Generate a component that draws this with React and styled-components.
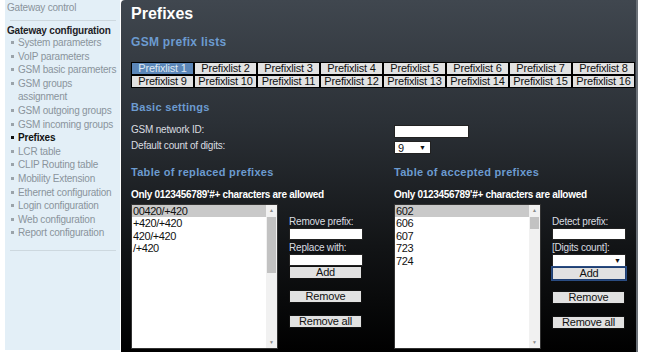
import React from "react";
import styled, { createGlobalStyle } from "styled-components";

const GlobalStyle = createGlobalStyle`
body {
    margin: 0;
    background: #fff;
    font-family: "Liberation Sans", Arial, sans-serif;
}
`

const Page = styled.div`
display: flex;
align-items: flex-start;
padding-left: 5px;
height: 359px;
overflow: hidden;
`
const Sidebar = styled.div`
width: 115px;
height: 350px;
flex-shrink: 0;
background: #e3eff7;
box-sizing: border-box;
padding: 1px 4px 0 2px;
font-size: 10px;
letter-spacing: -0.2px;
white-space: nowrap;
`
const SideTitle = styled.div`
color: ${p => p.dark ? "#1e2226" : "#8a939b"};
font-weight: ${p => p.dark ? "bold" : "normal"};
line-height: 13px;
padding-top: ${p => p.dark ? "3px" : "0"};
`
const Divider = styled.div`
border-top: 1px solid #cdd8df;
margin: ${p => p.margin};
`
const NavList = styled.ul`
list-style: none;
margin: -1px 0 0 0;
padding: 0;
`
const NavItem = styled.li`
position: relative;
padding-left: 11px;
line-height: 13.6px;
white-space: pre;
color: ${p => p.active ? "#111" : "#8a949c"};
font-weight: ${p => p.active ? "bold" : "normal"};
&::before {
    content: "";
    position: absolute;
    left: 4px;
    top: 5px;
    width: 3px;
    height: 3px;
    background: ${p => p.active ? "#111" : "#9aa3aa"};
}
`
const Main = styled.div`
width: 517px;
height: 352px;
flex-shrink: 0;
margin-left: 1px;
box-sizing: border-box;
padding: 3px 0 0 10px;
background: linear-gradient(#40474f 0%, #2b3036 35%, #121416 70%, #000 100%);
border-right: 2px solid #6a7077;
border-top-left-radius: 4px;
color: #dfe2e5;
`
const Title = styled.h1`
margin: 0;
font-size: 16px;
line-height: 22px;
color: #fff;
`
const Heading = styled.h2`
margin: ${p => p.margin || "0"};
font-size: ${p => p.size || "11px"};
line-height: 16px;
letter-spacing: 0.3px;
color: #6c9bd0;
`
const TabGrid = styled.div`
display: grid;
grid-template-columns: repeat(8, 63px);
margin-top: 12px;
`
const Tab = styled.div`
height: 13px;
box-sizing: border-box;
border: 1px solid #000;
background: ${p => p.active ? "#5b86b8" : "#e2e2e2"};
color: ${p => p.active ? "#dfe8f2" : "#111"};
font-size: 11px;
line-height: 11px;
letter-spacing: -0.2px;
text-align: center;
`
const Columns = styled.div`
display: grid;
grid-template-columns: 263px 1fr;
margin-top: ${p => p.mt || "0"};
`
const Label = styled.div`
font-size: 10px;
line-height: 16px;
height: 16px;
color: #dadde0;
letter-spacing: -0.2px;
`
const Hint = styled.div`
font-size: 10px;
font-weight: bold;
color: #fff;
line-height: 12px;
letter-spacing: -0.3px;
margin: 9px 0 3px;
`
const TextBox = styled.input`
display: block;
width: ${p => p.w || "74px"};
height: ${p => p.h || "12px"};
box-sizing: border-box;
margin: ${p => p.margin || "0"};
padding: 0;
border: 1px solid #222;
background: #fff;
`
const Select = styled.div`
display: flex;
justify-content: space-between;
align-items: center;
width: ${p => p.w};
height: 13px;
box-sizing: border-box;
margin-top: ${p => p.mt || "0"};
padding: 0 4px 0 3px;
background: #fff;
border: 1px solid #222;
color: #111;
font-size: 11px;
`
const Arrow = styled.span`
font-size: 7px;
`
const TableArea = styled.div`
display: flex;
gap: ${p => p.gap};
`
const ListBox = styled.div`
display: flex;
width: 147px;
height: 145px;
box-sizing: border-box;
background: #fff;
border: 1px solid #333;
`
const Options = styled.div`
flex: 1;
`
const Option = styled.div`
font-size: 11px;
line-height: 12.4px;
padding-left: 1px;
color: #111;
letter-spacing: -0.4px;
background: ${p => p.selected ? "#c9c9c9" : "transparent"};
`
const ScrollBar = styled.div`
width: 11px;
display: flex;
flex-direction: column;
background: #f1f1f1;
`
const ScrollArrow = styled.div`
height: 11px;
font-size: 5px;
color: #8a8a8a;
text-align: center;
line-height: 11px;
`
const Thumb = styled.div`
height: ${p => p.h};
margin: 1px 1px 0;
background: #c2c2c2;
`
const Spacer = styled.div`
flex: 1;
`
const Form = styled.div`
display: flex;
flex-direction: column;
padding-top: 11px;
`
const FormLabel = styled.div`
font-size: 10px;
line-height: 13px;
margin-top: ${p => p.mt || "0"};
color: #dadde0;
letter-spacing: -0.2px;
`
const Button = styled.button`
display: block;
width: ${p => p.w || "73px"};
height: 13px;
box-sizing: border-box;
margin: ${p => p.margin || "0"};
padding: 0;
font-family: inherit;
font-size: 11px;
line-height: 11px;
letter-spacing: -0.2px;
color: #111;
background: #e1e1e1;
border: 1px solid ${p => p.focus ? "#1f3f72" : "#111"};
outline: ${p => p.focus ? "1px solid #2a4c82" : "none"};
`

const navItems = [
    "System parameters", "VoIP parameters", "GSM basic parameters", "GSM groups\nassignment",
    "GSM outgoing groups", "GSM incoming groups", "Prefixes", "LCR table", "CLIP Routing table",
    "Mobility Extension", "Ethernet configuration", "Login configuration", "Web configuration",
    "Report configuration",
]

const replaced = ["00420/+420", "+420/+420", "420/+420", "/+420"]
const accepted = ["602", "606", "607", "723", "724"]

const PrefixList = ({ items, thumb }) => (
    <ListBox>
        <Options>
            {items.map((it, i) => <Option key={it} selected={i === 0}>{it}</Option>)}
        </Options>
        <ScrollBar>
            <ScrollArrow>▲</ScrollArrow>
            <Thumb h={thumb} />
            <Spacer />
            <ScrollArrow>▼</ScrollArrow>
        </ScrollBar>
    </ListBox>
)

export default function App() {
    return (
        <Page>
            <GlobalStyle />
            <Sidebar>
                <SideTitle>Gateway control</SideTitle>
                <Divider margin="6px 0 0 3px" />
                <SideTitle dark>Gateway configuration</SideTitle>
                <NavList>
                    {navItems.map(n => <NavItem key={n} active={n === "Prefixes"}>{n}</NavItem>)}
                </NavList>
                <Divider margin="10px 0 0 3px" />
            </Sidebar>
            <Main>
                <Title>Prefixes</Title>
                <Heading margin="9px 0 0" size="12px">GSM prefix lists</Heading>
                <TabGrid>
                    {Array.from({ length: 16 }, (_, i) => (
                        <Tab key={i} active={i === 0}>Prefixlist {i + 1}</Tab>
                    ))}
                </TabGrid>
                <Heading margin="11px 0 0">Basic settings</Heading>
                <Columns mt="7px">
                    <div>
                        <Label>GSM network ID:</Label>
                        <Label>Default count of digits:</Label>
                    </div>
                    <div>
                        <TextBox w="75px" h="13px" margin="3px 0 0" />
                        <Select w="37px" mt="3px">9<Arrow>▼</Arrow></Select>
                    </div>
                </Columns>
                <Columns mt="10px">
                    <div>
                        <Heading>Table of replaced prefixes</Heading>
                        <Hint>Only 0123456789'#+ characters are allowed</Hint>
                        <TableArea gap="11px">
                            <PrefixList items={replaced} thumb="56px" />
                            <Form>
                                <FormLabel>Remove prefix:</FormLabel>
                                <TextBox />
                                <FormLabel mt="1px">Replace with:</FormLabel>
                                <TextBox />
                                <Button>Add</Button>
                                <Button margin="11px 0 0">Remove</Button>
                                <Button margin="12px 0 0">Remove all</Button>
                            </Form>
                        </TableArea>
                    </div>
                    <div>
                        <Heading>Table of accepted prefixes</Heading>
                        <Hint>Only 0123456789'#+ characters are allowed</Hint>
                        <TableArea gap="11px">
                            <PrefixList items={accepted} thumb="12px" />
                            <Form>
                                <FormLabel>Detect prefix:</FormLabel>
                                <TextBox />
                                <FormLabel mt="1px">[Digits count]:</FormLabel>
                                <Select w="74px"><span /><Arrow>▼</Arrow></Select>
                                <Button focus w="74px">Add</Button>
                                <Button margin="11px 0 0">Remove</Button>
                                <Button margin="12px 0 0">Remove all</Button>
                            </Form>
                        </TableArea>
                    </div>
                </Columns>
            </Main>
        </Page>
    );
}
